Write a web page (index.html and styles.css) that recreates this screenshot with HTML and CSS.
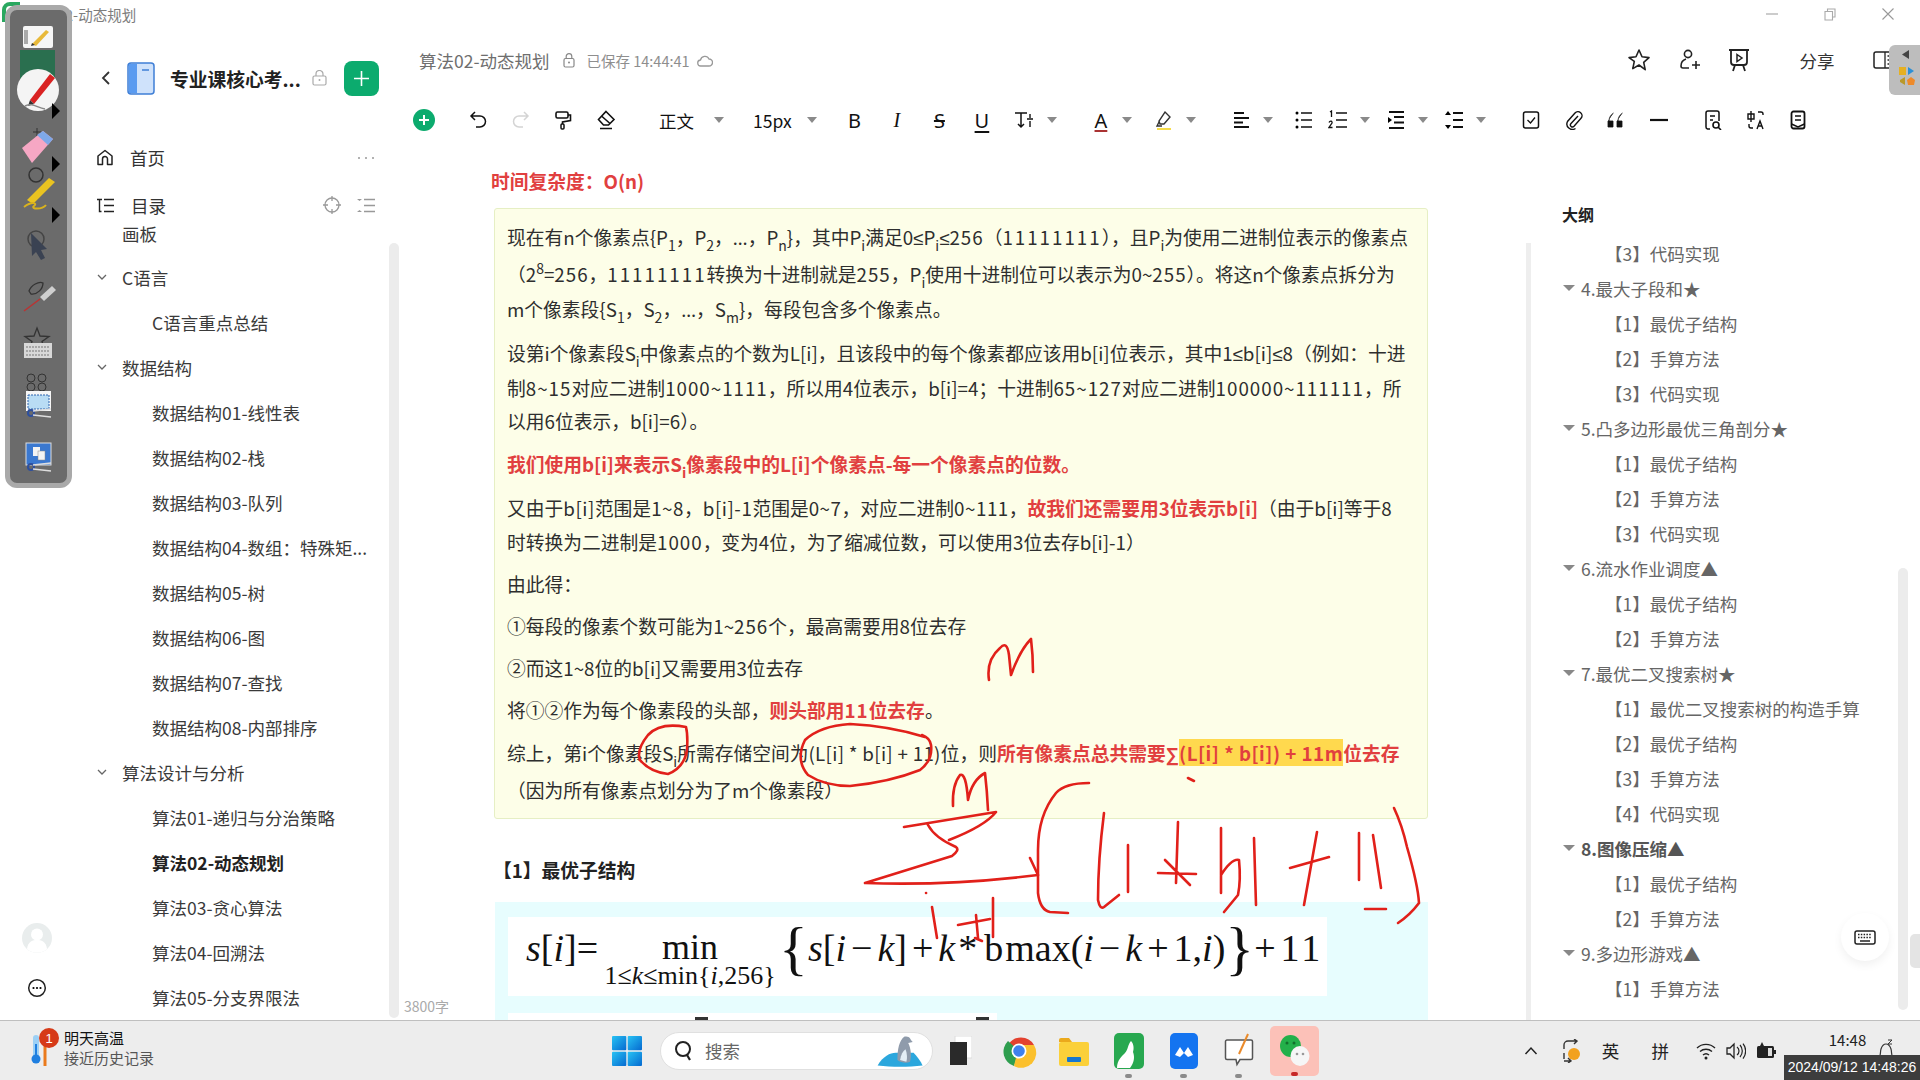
FILE: index.html
```html
<!DOCTYPE html>
<html lang="zh-CN">
<head>
<meta charset="utf-8">
<title>算法02-动态规划</title>
<link rel="stylesheet" href="styles.css">
</head>
<body>
<svg class="defs" width="0" height="0">
  <defs>
    <symbol id="caret" viewBox="0 0 10 8"><path d="M0 1h10L5 7z" fill="#8a8a8a"/></symbol>
    <symbol id="tri" viewBox="0 0 12 8"><path d="M0 1h12L6 7z" fill="#888"/></symbol>
    <symbol id="chev" viewBox="0 0 12 8"><path d="M2 2l4 4 4-4" fill="none" stroke="#666" stroke-width="1.3"/></symbol>
    <linearGradient id="winblue" x1="0" y1="0" x2="1" y2="1"><stop offset="0" stop-color="#28c3f4"/><stop offset="1" stop-color="#0569d0"/></linearGradient>
  </defs>
</svg>
<div class="app">
  <header class="titlebar">
    <span class="win-title">算法02-动态规划</span>
    <div class="win-controls">
      <svg width="14" height="14" viewBox="0 0 14 14"><path d="M1 7h12" stroke="#aaa" stroke-width="1.2"/></svg>
      <svg width="14" height="14" viewBox="0 0 14 14"><path d="M2 4.500h7.500V13H2zM4.500 4.500V2H12v8h-2.500" fill="none" stroke="#aaa" stroke-width="1.100"/></svg>
      <svg width="14" height="14" viewBox="0 0 14 14"><path d="M1.500 1.500l11 11M12.500 1.500l-11 11" stroke="#999" stroke-width="1.100"/></svg>
    </div>
  </header>

  <div class="workspace">
    <aside class="sidebar">
      <div class="rail">
        <svg class="avatar" width="30" height="30" viewBox="0 0 30 30"><circle cx="15" cy="15" r="15" fill="#e9eded"/><circle cx="15" cy="11.500" r="6" fill="#fff"/><path d="M5 26c1-8 6-9 10-9s9 1 10 9a15 15 0 0 1-20 0z" fill="#fff"/></svg>
        <svg class="rail-more" width="20" height="20" viewBox="0 0 20 20"><circle cx="10" cy="10" r="8.300" fill="none" stroke="#222" stroke-width="1.500"/><circle cx="6.500" cy="10" r="1.100"/><circle cx="10" cy="10" r="1.100"/><circle cx="13.500" cy="10" r="1.100"/></svg>
      </div>
      <div class="panel">
        <div class="kb-head">
          <svg class="kb-back" width="12" height="18" viewBox="0 0 12 18"><path d="M9 3L3 9l6 6" fill="none" stroke="#333" stroke-width="1.800"/></svg>
          <svg class="kb-book" width="28" height="33" viewBox="0 0 28 33"><rect x="1" y="1" width="26" height="31" rx="3" fill="#cfe2fb" stroke="#3f7fd6" stroke-width="1.500"/><path d="M2 2h8v29H2z" fill="#5a9bf0"/><path d="M15 8h7" stroke="#3f7fd6" stroke-width="1.500"/></svg>
          <strong class="kb-name">专业课核心考...</strong>
          <svg class="kb-lock" width="15" height="16" viewBox="0 0 15 16"><rect x="1" y="6" width="13" height="9" rx="1.500" fill="none" stroke="#aaa" stroke-width="1.200"/><path d="M4 6V4a3.500 3.500 0 0 1 7 0v2" fill="none" stroke="#aaa" stroke-width="1.200"/><circle cx="7.500" cy="10" r="1" fill="#aaa"/></svg>
          <button class="kb-add"><svg width="17" height="17" viewBox="0 0 17 17"><path d="M8.500 1v15M1 8.500h15" stroke="#fff" stroke-width="1.600"/></svg></button>
        </div>
        <div class="nav-row">
          <svg width="16" height="17" viewBox="0 0 16 17"><path d="M1 7l7-5.500L15 7v8.500h-4.500V10a2.500 2.500 0 0 0-5 0v5.500H1z" fill="none" stroke="#222" stroke-width="1.500" stroke-linejoin="round"/></svg>
          <span class="nav-label">首页</span>
          <span class="nav-tools"><svg width="18" height="4" viewBox="0 0 18 4"><circle cx="2" cy="2" r="1" fill="#999"/><circle cx="9" cy="2" r="1" fill="#999"/><circle cx="16" cy="2" r="1" fill="#999"/></svg></span>
        </div>
        <div class="nav-row nav-toc">
          <svg width="17" height="15" viewBox="0 0 17 15"><path d="M0 1.500h5M2.500 1.500v12h2M7 1.500h10M7 7.500h10M7 13.500h10" fill="none" stroke="#222" stroke-width="1.400"/></svg>
          <span class="nav-label">目录</span>
          <span class="nav-tools">
            <svg width="20" height="20" viewBox="0 0 20 20"><circle cx="10" cy="10" r="7" fill="none" stroke="#999" stroke-width="1.300"/><path d="M10 1v5M10 14v5M1 10h5M14 10h5" stroke="#999" stroke-width="1.300"/></svg>
            <svg width="18" height="15" viewBox="0 0 18 15"><path d="M0 1l2.500 2L5 1zM0 14l2.500-2L5 14z" fill="#999"/><path d="M7 1.500h11M7 7.500h11M7 13.500h11" stroke="#999" stroke-width="1.300"/></svg>
          </span>
        </div>
        <div class="tree-wrap">
          <div class="tree">
            <div class="tree-row l0 first">画板</div>
            <div class="tree-row l0"><svg class="tw" width="12" height="8"><use href="#chev"/></svg>C语言</div>
            <div class="tree-row l1">C语言重点总结</div>
            <div class="tree-row l0"><svg class="tw" width="12" height="8"><use href="#chev"/></svg>数据结构</div>
            <div class="tree-row l1">数据结构01-线性表</div>
            <div class="tree-row l1">数据结构02-栈</div>
            <div class="tree-row l1">数据结构03-队列</div>
            <div class="tree-row l1">数据结构04-数组：特殊矩...</div>
            <div class="tree-row l1">数据结构05-树</div>
            <div class="tree-row l1">数据结构06-图</div>
            <div class="tree-row l1">数据结构07-查找</div>
            <div class="tree-row l1">数据结构08-内部排序</div>
            <div class="tree-row l0"><svg class="tw" width="12" height="8"><use href="#chev"/></svg>算法设计与分析</div>
            <div class="tree-row l1">算法01-递归与分治策略</div>
            <div class="tree-row l1 current">算法02-动态规划</div>
            <div class="tree-row l1">算法03-贪心算法</div>
            <div class="tree-row l1">算法04-回溯法</div>
            <div class="tree-row l1">算法05-分支界限法</div>
          </div>
          <div class="tree-scroll"></div>
        </div>
      </div>
    </aside>

    <main class="main">
      <div class="docbar">
        <span class="doc-name">算法02-动态规划</span>
        <svg class="doc-lock" width="12" height="15" viewBox="0 0 12 15"><rect x="1" y="5.500" width="10" height="8.500" rx="1.500" fill="none" stroke="#888" stroke-width="1.200"/><path d="M3.200 5.500V3.500a2.800 2.800 0 0 1 5.600 0v2" fill="none" stroke="#888" stroke-width="1.200"/><circle cx="6" cy="9.500" r="1" fill="#888"/></svg>
        <span class="doc-saved">已保存 14:44:41</span>
        <svg class="doc-cloud" width="16" height="13" viewBox="0 0 16 13"><path d="M4 12a3 3 0 0 1-.5-6 4.500 4.500 0 0 1 8.500-1 3.500 3.500 0 0 1 0 7z" fill="none" stroke="#999" stroke-width="1.300"/></svg>
        <div class="doc-actions">
          <svg width="24" height="24" viewBox="0 0 24 24"><path d="M12 2l3 6.800 7 .8-5.300 4.800 1.500 7.200L12 17l-6.200 3.600 1.500-7.200L2 9.600l7-.8z" fill="none" stroke="#222" stroke-width="1.600" stroke-linejoin="round"/></svg>
          <svg width="24" height="24" viewBox="0 0 24 24"><circle cx="11" cy="6" r="3.600" fill="none" stroke="#222" stroke-width="1.600"/><path d="M9 11c-3 1-5 4-5 7 0 1 1 2 2 2h6M15 17h8M19 13v8" fill="none" stroke="#222" stroke-width="1.600"/></svg>
          <svg width="24" height="24" viewBox="0 0 24 24"><path d="M2 2h20M4 2v12a3 3 0 0 0 3 3h10a3 3 0 0 0 3-3V2M8 17l-2 6M16 17l2 6" fill="none" stroke="#222" stroke-width="1.800"/><path d="M10 6.500l5 3.500-5 3.500z" fill="none" stroke="#222" stroke-width="1.500"/></svg>
          <span class="share">分享</span>
          <svg width="20" height="20" viewBox="0 0 20 20"><rect x="1" y="2" width="18" height="16" rx="2" fill="none" stroke="#222" stroke-width="1.500"/><path d="M12 2v16M14.500 6h3M14.500 10h3M14.500 14h3" stroke="#222" stroke-width="1.300"/></svg>
        </div>
      </div>

      <div class="toolbar">
        <button class="fmt-add"><svg width="14" height="14" viewBox="0 0 14 14"><path d="M7 2v10M2 7h10" stroke="#fff" stroke-width="2"/></svg></button>
        <div class="grp g-hist">
          <span class="tb"><svg viewBox="0 0 20 20"><path d="M7 2L3 6l4 4M3 6h9a5.500 5.500 0 0 1 0 11H8" fill="none" stroke="#111" stroke-width="1.500"/></svg></span>
          <span class="tb"><svg viewBox="0 0 20 20"><path d="M13 2l4 4-4 4M17 6H8a5.500 5.500 0 0 0 0 11h4" fill="none" stroke="#d4d4d4" stroke-width="1.500"/></svg></span>
          <span class="tb"><svg viewBox="0 0 20 20"><rect x="3" y="2" width="12" height="6" rx="1.500" fill="none" stroke="#111" stroke-width="1.600"/><path d="M15 5h2.500v5.500L9.500 12v2" fill="none" stroke="#111" stroke-width="1.600"/><rect x="8" y="14" width="3" height="5" rx="1" fill="none" stroke="#111" stroke-width="1.500"/></svg></span>
          <span class="tb"><svg viewBox="0 0 20 20"><path d="M10 1.500l8 8L12.500 15h-5L2.500 9.500zM5.500 6l8.500 7.500M4 18.500h12" fill="none" stroke="#111" stroke-width="1.600"/></svg></span>
        </div>
        <div class="sel s-style"><span>正文</span><svg class="crt" width="10" height="8"><use href="#caret"/></svg></div>
        <div class="sel s-size"><span>15px</span><svg class="crt" width="10" height="8"><use href="#caret"/></svg></div>
        <div class="grp g-text">
          <span class="tb txt">B</span>
          <span class="tb txt it">I</span>
          <span class="tb txt st">S</span>
          <span class="tb txt un">U</span>
          <span class="tb"><svg viewBox="0 0 20 20"><path d="M1 3h12M7 3v14M4 14l3 3 3-3" fill="none" stroke="#111" stroke-width="1.500"/><path d="M13 9h6M16 4v4M16 11v6" fill="none" stroke="#111" stroke-width="1.400"/></svg></span>
          <svg class="crt c1" width="10" height="8"><use href="#caret"/></svg>
        </div>
        <div class="grp g-color">
          <span class="tb txt fc">A</span>
          <svg class="crt" width="10" height="8"><use href="#caret"/></svg>
          <span class="tb hl"><svg viewBox="0 0 20 20"><path d="M11 2l5 5-6 7H6l-1-3zM5 12l-2 4h5" fill="none" stroke="#333" stroke-width="1.400"/><path d="M3 19h14" stroke="#f6dc4a" stroke-width="2"/></svg></span>
          <svg class="crt" width="10" height="8"><use href="#caret"/></svg>
        </div>
        <div class="grp g-para">
          <span class="tb"><svg viewBox="0 0 20 20"><path d="M2 3h10M2 8h15M2 12.500h9M2 17h15" stroke="#111" stroke-width="1.800"/></svg></span>
          <svg class="crt" width="10" height="8"><use href="#caret"/></svg>
          <span class="tb n m14"><svg viewBox="0 0 20 20"><path d="M7 3h11M7 10h11M7 17h11" stroke="#111" stroke-width="1.600"/><circle cx="3" cy="3" r="1.500"/><circle cx="3" cy="10" r="1.500"/><circle cx="3" cy="17" r="1.500"/></svg></span>
          <span class="tb n"><svg viewBox="0 0 20 20"><path d="M8 3h11M8 10h11M8 17h11" stroke="#111" stroke-width="1.600"/><path d="M2 2l1.500-1v6M1 12.500c1-2 3.500-1.500 3 .5L1 17.500h3.500" fill="none" stroke="#111" stroke-width="1.300"/></svg></span>
          <svg class="crt c5" width="10" height="8"><use href="#caret"/></svg>
          <span class="tb n m9"><svg viewBox="0 0 20 20"><path d="M3 2h15M8 7h10M8 12.500h10M3 18h15" stroke="#111" stroke-width="1.800"/><path d="M2 7l4 3-4 3z"/></svg></span>
          <svg class="crt c5" width="10" height="8"><use href="#caret"/></svg>
          <span class="tb n m9"><svg viewBox="0 0 20 20"><path d="M9 3h10M9 10h10M9 17h10" stroke="#111" stroke-width="1.800"/><path d="M4 1l3 4H1zM4 19l3-4H1z"/></svg></span>
          <svg class="crt c5" width="10" height="8"><use href="#caret"/></svg>
        </div>
        <div class="grp g-ins">
          <span class="tb"><svg viewBox="0 0 20 20"><rect x="2.500" y="2" width="15" height="16" rx="2" fill="none" stroke="#111" stroke-width="1.500"/><path d="M6.500 10l3 3 4.500-5.500" fill="none" stroke="#111" stroke-width="1.300"/></svg></span>
          <span class="tb"><svg viewBox="0 0 20 20"><path d="M14 6l-7 7.500a2 2 0 0 0 3 2.800l7-8a4 4 0 0 0-6-5.300l-7.500 8.500a5.500 5.500 0 0 0 8 7" fill="none" stroke="#111" stroke-width="1.400"/></svg></span>
          <span class="tb"><svg viewBox="0 0 20 20"><path d="M7.500 3C4.500 5 3 8 3 11h4v6H2v-6M16.500 3c-3 2-4.500 5-4.500 8h4v6h-5v-6" fill="#111" stroke="#111" stroke-width=".8"/></svg></span>
          <span class="tb"><svg viewBox="0 0 20 20"><path d="M1 10h18" stroke="#111" stroke-width="2.200"/></svg></span>
        </div>
        <div class="grp g-ext">
          <span class="tb"><svg viewBox="0 0 20 20"><path d="M7 19H4.500a2 2 0 0 1-1.500-2V3a2 2 0 0 1 2-2h9a2 2 0 0 1 2 2v8M7 6h5M7 10h3" fill="none" stroke="#111" stroke-width="1.500"/><circle cx="13" cy="15" r="3" fill="none" stroke="#111" stroke-width="1.600"/><path d="M15 17l3 3" stroke="#111" stroke-width="1.600"/></svg></span>
          <span class="tb"><svg viewBox="0 0 20 20"><path d="M2 4h6v5H2zM5 1v11M12 2h3a2 2 0 0 1 2 2v1M3 14v2a2 2 0 0 0 2 2h2M11 19l3-8 3 8M12 16h4" fill="none" stroke="#111" stroke-width="1.400"/></svg></span>
          <span class="tb"><svg viewBox="0 0 20 20"><rect x="3.500" y="1.500" width="13" height="17" rx="2" fill="none" stroke="#111" stroke-width="1.800"/><path d="M7 6h6M7 10h6M3.500 14l6.500 3 6.500-3" fill="none" stroke="#111" stroke-width="1.500"/></svg></span>
        </div>
      </div>

      <div class="doc-row">
        <section class="editor">
          <p class="ed-red-head">时间复杂度：O(n)</p>
          <div class="callout">
            <p class="tall">现在有n个像素点{P<sub>1</sub>，P<sub>2</sub>，<span class="sym">…</span>，P<sub>n</sub>}，其中P<sub>i</sub>满足0<span class="sym">≤</span>P<sub>i</sub><span class="sym">≤</span><span class="d">256</span>（<span class="d2">11111111</span>），且P<sub>i</sub>为使用二进制位表示的像素点<br>（2<sup>8</sup>=<span class="d">256</span>，<span class="d2">11111111</span>转换为十进制就是<span class="d">255</span>，P<sub>i</sub>使用十进制位可以表示为0~<span class="d">255</span>）。将这n个像素点拆分为<br>m个像素段{S<sub>1</sub>，S<sub>2</sub>，<span class="sym">…</span>，S<sub>m</sub>}，每段包含多个像素点。</p>
            <p>设第i个像素段S<sub>i</sub>中像素点的个数为L[i]，且该段中的每个像素都应该用b[i]位表示，其中1<span class="sym">≤</span>b[i]<span class="sym">≤</span>8（例如：十进<br>制<span class="d">8~15</span>对应二进制<span class="d">1000~1111</span>，所以用4位表示，b[i]=4；十进制<span class="d">65~127</span>对应二进制<span class="d">100000~111111</span>，所<br>以用6位表示，b[i]=6）。</p>
            <p class="after-sub"><b class="red">我们使用b[i]来表示S<sub>i</sub>像素段中的L[i]个像素点-每一个像素点的位数。</b></p>
            <p>又由于<span class="d5">b[i]</span>范围是<span class="d5">1~8</span>，<span class="d5">b[i]-1</span>范围是<span class="d5">0~7</span>，对应二进制<span class="d5">0~111</span>，<b class="red">故我们还需要用3位表示b[i]</b>（由于b[i]等于8<br>时转换为二进制是<span class="d">1000</span>，变为4位，为了缩减位数，可以使用3位去存b[i]-1）</p>
            <p>由此得：</p>
            <p>①每段的像素个数可能为1~<span class="d">256</span>个，最高需要用8位去存</p>
            <p>②而这1~8位的b[i]又需要用3位去存</p>
            <p>将①②作为每个像素段的头部，<b class="red">则头部用<span class="d">11</span>位去存</b>。</p>
            <p class="tall">综上，第i个像素段S<sub>i</sub>所需存储空间为<span class="d3">(L[i] * b[i] + 11)</span>位，则<b class="red">所有像素点总共需要<span class="sym">∑</span><mark>(L[i] * b[i]) + 11m</mark>位去存</b><br>（因为所有像素点划分为了m个像素段）</p>
          </div>
          <h3 class="ed-h3">【1】最优子结构</h3>
          <div class="figure">
            <div class="eq">
              <span class="eq-i">s</span><span>[</span><span class="eq-i">i</span><span>]=</span>
              <span class="eq-lim"><span class="eq-min">min</span><span class="eq-under">1≤<i>k</i>≤min{<i>i</i>,256}</span></span>
              <span class="eq-brace open">{</span><span class="eq-i">s</span><span>[</span><span class="eq-i">i</span><span class="eq-op">−</span><span class="eq-i">k</span><span>]</span><span class="eq-op">+</span><span class="eq-i">k</span><span class="eq-star">*</span><span>b</span><span class="eq-gap">max(</span><span class="eq-i">i</span><span class="eq-op">−</span><span class="eq-i">k</span><span class="eq-op">+</span><span>1,</span><span class="eq-i">i</span><span>)</span><span class="eq-brace close">}</span><span class="eq-op">+</span><span class="eq-tail">11</span>
            </div>
            <div class="eq2"><span class="tick"></span><span class="tick"></span></div>
          </div>
          <span class="wordcount">3800字</span>
        </section>
        <aside class="outline">
          <div class="outline-title">大纲</div>
          <div class="outline-list">
            <div class="ol2">【3】代码实现</div>
            <div class="ol1"><svg class="olt" width="12" height="8"><use href="#tri"/></svg>4.最大子段和★</div>
            <div class="ol2">【1】最优子结构</div>
            <div class="ol2">【2】手算方法</div>
            <div class="ol2">【3】代码实现</div>
            <div class="ol1"><svg class="olt" width="12" height="8"><use href="#tri"/></svg>5.凸多边形最优三角剖分★</div>
            <div class="ol2">【1】最优子结构</div>
            <div class="ol2">【2】手算方法</div>
            <div class="ol2">【3】代码实现</div>
            <div class="ol1"><svg class="olt" width="12" height="8"><use href="#tri"/></svg>6.流水作业调度▲</div>
            <div class="ol2">【1】最优子结构</div>
            <div class="ol2">【2】手算方法</div>
            <div class="ol1"><svg class="olt" width="12" height="8"><use href="#tri"/></svg>7.最优二叉搜索树★</div>
            <div class="ol2">【1】最优二叉搜索树的构造手算</div>
            <div class="ol2">【2】最优子结构</div>
            <div class="ol2">【3】手算方法</div>
            <div class="ol2">【4】代码实现</div>
            <div class="ol1 active"><svg class="olt" width="12" height="8"><use href="#tri"/></svg>8.图像压缩▲</div>
            <div class="ol2">【1】最优子结构</div>
            <div class="ol2">【2】手算方法</div>
            <div class="ol1"><svg class="olt" width="12" height="8"><use href="#tri"/></svg>9.多边形游戏▲</div>
            <div class="ol2">【1】手算方法</div>
          </div>
          <div class="outline-scroll"></div>
          <div class="outline-scroll2"></div>
          <div class="kbd-fab"><svg width="22" height="15" viewBox="0 0 22 15"><rect x="1" y="1" width="20" height="13" rx="2" fill="none" stroke="#222" stroke-width="1.500"/><path d="M4 4.500h14M4 7.500h14" stroke="#222" stroke-width="1.500" stroke-dasharray="1.500 1.300"/><path d="M6 11h10" stroke="#222" stroke-width="1.500"/></svg></div>
        </aside>
      </div>
    </main>
  </div>

  <footer class="taskbar">
    <div class="weather">
      <svg class="therm" width="30" height="34" viewBox="0 0 30 34"><path d="M6 4v18" stroke="#9cd0f5" stroke-width="6" stroke-linecap="round"/><circle cx="6" cy="25" r="4.500" fill="#1f7fe0"/><path d="M6 10v14" stroke="#1f7fe0" stroke-width="2"/><path d="M15 8v24" stroke="#ea7a1c" stroke-width="3"/></svg>
      <span class="wx-badge">1</span>
      <div class="wx-text"><span class="wx-a">明天高温</span><span class="wx-b">接近历史记录</span></div>
    </div>
    <svg class="winlogo" width="30" height="30" viewBox="0 0 30 30"><rect x="0" y="0" width="14.300" height="14.300" rx="1" fill="url(#winblue)"/><rect x="15.700" y="0" width="14.300" height="14.300" rx="1" fill="url(#winblue)"/><rect x="0" y="15.700" width="14.300" height="14.300" rx="1" fill="url(#winblue)"/><rect x="15.700" y="15.700" width="14.300" height="14.300" rx="1" fill="url(#winblue)"/></svg>
    <div class="searchbox">
      <svg width="20" height="22" viewBox="0 0 20 22"><circle cx="9" cy="9" r="7" fill="none" stroke="#222" stroke-width="2"/><path d="M13 15l3 5" stroke="#222" stroke-width="2.200"/></svg>
      <span class="search-ph">搜索</span>
      <svg class="dolphin" width="60" height="36" viewBox="0 0 60 36"><path d="M4 34c6-10 14-14 20-14l20 0c4 4 8 10 10 14-16 2-34 2-50 0z" fill="#2ba7dd"/><path d="M26 28c0-12 2-22 8-26 6-1 6 3 9 6l-5 1c3 6 4 14 2 21-4 2-10 1-14-2z" fill="#8f9bab"/><path d="M29 28c1-6 3-10 6-12 2 5 2 10 1 14z" fill="#e4eef6"/></svg>
    </div>
    <svg class="taskview" width="22" height="29" viewBox="0 0 22 29"><rect x="5" y="0" width="17" height="22" fill="#fff" stroke="#ddd"/><rect x="0" y="6" width="17" height="23" fill="#2a2a2a"/></svg>
    <div class="apps">
      <div class="app-slot">
        <svg width="36" height="36" viewBox="0 0 36 36"><path d="M18 18L7 12A15 15 0 0 1 33 12H18z" fill="#e3412f"/><path d="M18 18L7 8A15 15 0 0 0 13 33z" fill="#2e9e4f"/><path d="M18 12H33A15 15 0 0 1 13 33z" fill="#fbc02d"/><circle cx="18" cy="18" r="7.500" fill="#fff"/><circle cx="18" cy="18" r="5.800" fill="#3f81ee"/></svg>
      </div>
      <div class="app-slot">
        <svg width="30" height="32" viewBox="0 0 30 32"><path d="M0 5a2 2 0 0 1 2-2h8l3 4h-13z" fill="#eba91c"/><rect x="0" y="7" width="30" height="24" rx="2" fill="#fbd03a"/><rect x="8" y="22" width="14" height="5" rx="1" fill="#1677d0"/></svg>
      </div>
      <div class="app-slot run">
        <svg width="30" height="36" viewBox="0 0 30 36"><rect width="30" height="36" rx="5" fill="#28a850"/><path d="M3 35c0-8 5-12 8-15 3-3 3-9 6-12 3 3 3 8 2 11 2 5 1 11-3 16z" fill="#fff"/></svg>
      </div>
      <div class="app-slot run">
        <svg width="28" height="36" viewBox="0 0 28 36"><rect width="28" height="36" rx="5" fill="#1474f0"/><path d="M5 22l5-8 4 6 4-6 5 8-5 2-4-4-4 4z" fill="#fff"/></svg>
      </div>
      <div class="app-slot run">
        <svg width="30" height="38" viewBox="0 0 30 38"><path d="M3 8h24a1.500 1.500 0 0 1 1.500 1.500V26a1.500 1.500 0 0 1-1.500 1.500H16l-3 5-1-5H3A1.500 1.500 0 0 1 1.500 26V9.500A1.500 1.500 0 0 1 3 8z" fill="#fff" stroke="#555" stroke-width="1.500"/><path d="M15 22l9-20" stroke="#ea8a2a" stroke-width="2"/></svg>
      </div>
      <div class="app-slot wechat">
        <svg width="30" height="32" viewBox="0 0 30 32"><ellipse cx="10.500" cy="11" rx="10.500" ry="11" fill="#23b04a"/><circle cx="7" cy="8" r="1.500" fill="#11702c"/><circle cx="14" cy="8" r="1.500" fill="#11702c"/><ellipse cx="20" cy="21" rx="9.500" ry="10" fill="#f6f6f6"/><circle cx="17" cy="19" r="1.300" fill="#999"/><circle cx="23" cy="19" r="1.300" fill="#999"/></svg>
      </div>
    </div>
    <div class="tray">
      <span class="ti w40"><svg width="14" height="9" viewBox="0 0 14 9"><path d="M1.500 8L7 2l5.500 6" fill="none" stroke="#222" stroke-width="1.500"/></svg></span>
      <span class="ti w40"><svg width="20" height="24" viewBox="0 0 20 24"><path d="M3 10V6a4 4 0 0 1 4-4h9M13 0l3 2-3 3M3 22h6M7 19l3 3-3 2M3 14v6" fill="none" stroke="#333" stroke-width="1.400"/><circle cx="13" cy="15" r="6" fill="#f2a11f"/></svg></span>
      <span class="ti ime w39">英</span>
      <span class="ti ime w60">拼</span>
      <span class="ti w30"><svg width="20" height="18" viewBox="0 0 20 18"><path d="M1 6a13 13 0 0 1 18 0M4 9.500a9 9 0 0 1 12 0M7 13a4.500 4.500 0 0 1 6 0" fill="none" stroke="#222" stroke-width="1.400"/><circle cx="10" cy="16" r="1.500" fill="#222"/></svg></span>
      <span class="ti w30"><svg width="20" height="18" viewBox="0 0 20 18"><path d="M1 6h3l4-4v14l-4-4H1z" fill="none" stroke="#222" stroke-width="1.300"/><path d="M11 5a5 5 0 0 1 0 8M14 3a9 9 0 0 1 0 12M17 1.500a12 12 0 0 1 0 15" fill="none" stroke="#222" stroke-width="1.200"/></svg></span>
      <span class="ti w30"><svg width="20" height="20" viewBox="0 0 20 20"><rect x="1" y="5" width="17" height="12" rx="1.500" fill="#222"/><path d="M6 1l3 6H3zM18 9h2v4h-2" fill="#222"/><rect x="12" y="7" width="4" height="8" fill="#ddd"/></svg></span>
      <div class="clock"><span>14:48</span><span>2024/9/12</span></div>
      <svg class="bell" width="18" height="24" viewBox="0 0 18 24"><path d="M2 19c2-2 1-6 2-9s3-5 5-5 4 2 5 5 0 7 2 9zM7 21a2 2 0 0 0 4 0" fill="none" stroke="#333" stroke-width="1.200"/><path d="M11 1h4l-4 4h4" fill="none" stroke="#333" stroke-width="1"/></svg>
    </div>
  </footer>
</div>

<div class="stamp">2024/09/12 14:48:26</div>

<div class="pen-bar">
  <div class="pen-inner">
    <svg class="pen-art" width="58" height="473" viewBox="0 0 58 473">
      <rect x="14" y="16" width="30" height="22" rx="2" fill="#f6f6f6"/><path d="M17 20v14" stroke="#aaa" stroke-width="4"/><path d="M23 34l14-14 3 2-13 14z" fill="#e8b93a"/><path d="M22 36l1-3 3 2z" fill="#333"/>
      <rect x="11" y="40" width="35" height="30" fill="#2a6f4f"/>
      <circle cx="29" cy="80" r="21" fill="#f4f4f4"/><path d="M21 90L41 64l5 4-21 26z" fill="#d92222"/><path d="M21 90l-2 6 6-2z" fill="#333"/><path d="M16 96c8-4 12 2 20 3" stroke="#888" fill="none" stroke-width="1.500"/><path d="M43 93l8 8-8 8z" fill="#000"/>
      <path d="M28 118v8M24 122h8" stroke="#333"/><path d="M13 138l21-17 10 8-21 24z" fill="#f6a7c4"/><path d="M28 125l6-4 10 8-5 6z" fill="#7ea8e8"/><path d="M43 146l8 8-8 8z" fill="#000"/>
      <circle cx="27" cy="165" r="7" fill="none" stroke="#333" stroke-width="1.500"/><path d="M18 190l22-22 6 4-22 22z" fill="#eac321"/><path d="M15 197c8-6 14-4 10-1s8 4 12-1" fill="none" stroke="#d9b21e" stroke-width="2"/><path d="M43 197l8 8-8 8z" fill="#000"/>
      <circle cx="27" cy="229" r="8" fill="none" stroke="#444" stroke-width="1.500"/><path d="M22 223l16 16-6 1 4 8-4 2-5-8-4 4z" fill="#3a4252"/>
      <path d="M20 281c2-6 10-10 14-8 0 6-6 12-12 11z" fill="none" stroke="#333" stroke-width="1.300"/><path d="M31 287l12-11 4 4-12 11z" fill="#cfcfcf"/><path d="M15 301l16-12" stroke="#b33" stroke-width="1.500"/>
      <path d="M28 318l3 8 9 .5-7 5 2.500 8.500-7.500-5-7.500 5 2.500-8.500-7-5 9-.5z" fill="none" stroke="#333" stroke-width="1.300"/><rect x="15" y="333" width="28" height="15" fill="#d8d8d8"/><path d="M17 337h24M17 341h24M17 345h24" stroke="#777" stroke-dasharray="2 1"/>
      <circle cx="22" cy="368" r="4" fill="none" stroke="#333"/><circle cx="33" cy="368" r="4" fill="none" stroke="#333"/><circle cx="22" cy="377" r="4" fill="none" stroke="#333"/><circle cx="33" cy="377" r="4" fill="none" stroke="#333"/><rect x="17" y="381" width="25" height="20" fill="#f6f6f6"/><rect x="19" y="385" width="21" height="14" fill="#b9dcf4" stroke="#2d62ad" stroke-dasharray="2 1"/><circle cx="22" cy="403" r="3" fill="none" stroke="#2d4f9e" stroke-width="2"/><path d="M24 401l18-2M24 405l18 2" stroke="#ddd" stroke-width="1.500"/>
      <rect x="17" y="433" width="25" height="22" fill="#3a78d0" stroke="#ddd"/><rect x="24" y="437" width="7" height="9" fill="#f3f3f3"/><rect x="29" y="441" width="7" height="9" fill="#f3f3f3" stroke="#888" stroke-width=".5"/><circle cx="22" cy="457" r="3" fill="none" stroke="#2d4f9e" stroke-width="2"/><path d="M24 455l18-2M24 459l18 2" stroke="#ddd" stroke-width="1.500"/>
    </svg>
  </div>
</div>

<svg class="logo-arc" width="22" height="22" viewBox="0 0 22 22"><path d="M3 20V8a6 6 0 0 1 6-6h10" fill="none" stroke="#2aa860" stroke-width="4"/></svg>

<div class="side-tab">
  <svg width="18" height="40" viewBox="0 0 18 40"><path d="M12 4v9l-7-4.500z" fill="#444"/><rect x="2" y="21" width="7" height="8" fill="#e6b022"/><path d="M11 21l6 4-6 4z" fill="#2b8fd6"/><path d="M8 31v8l-5-3v-2z" fill="#b9992a"/><path d="M14 31l4 3-1 5h-6l-1-5z" fill="#ee8a2a"/></svg>
</div>

<svg class="ink" width="1920" height="1080" viewBox="0 0 1920 1080" fill="none" stroke="#e1201a" stroke-width="2.600" stroke-linecap="round" stroke-linejoin="round">
  <path d="M989 680Q986 660 1000 648Q1007 640 1009 655L1011 675Q1020 650 1031 639Q1033 655 1033 672"/>
  <path d="M686 727Q660 722 648 735Q636 750 640 760Q650 772 668 774Q684 768 687 750Q688 735 686 727"/>
  <path d="M925 737Q890 726 850 724Q820 726 805 740Q795 760 808 775Q825 786 850 786Q890 782 920 770Q933 760 931 745Q930 738 922 735"/>
  <path d="M953 806Q952 785 960 775Q966 772 968 800Q972 780 985 773Q987 790 988 810"/>
  <path d="M904 827L996 812Q985 826 949 840M928 825Q935 838 956 847Q960 850 952 856L865 883Q950 886 1038 875M1030 858L1038 875"/>
  <path d="M926 893h.1M932 907L937 938M976 915L978 938M958 925L990 919M993 898L993 937M975 938L982 941"/>
  <path d="M1089 783Q1065 783 1056 793Q1038 815 1038 850L1038 893Q1040 910 1050 912L1068 913"/>
  <path d="M1104 813Q1098 860 1098 900Q1100 910 1104 907L1119 895"/>
  <path d="M1128 845V892M1158 873L1196 874M1178 822L1176 883M1165 860L1190 885"/>
  <path d="M1221 828V893M1221 875Q1232 858 1239 860Q1241 880 1238 895L1224 912"/>
  <path d="M1254 838L1256 905M1317 832L1304 905M1290 868L1329 857"/>
  <path d="M1359 833L1359 880M1373 835L1381 888M1365 909H1386"/>
  <path d="M1394 808Q1402 825 1407 847Q1418 885 1419 903Q1410 915 1398 923"/>
  <path d="M1188 778L1194 781"/>
</svg>
</body>
</html>
```
FILE: styles.css
```css
*{box-sizing:border-box}
html,body{margin:0;height:100%;overflow:hidden}
body{background:#fff;font-family:"Noto Sans CJK SC","Noto Sans",sans-serif;color:#333;position:relative}
.defs{position:absolute}
.app{display:flex;flex-direction:column;width:1920px;height:1080px}
button{border:0;padding:0;display:flex;align-items:center;justify-content:center}

/* title bar */
.titlebar{height:28px;flex:none;display:flex;align-items:center;padding-left:28px}
.win-title{font-size:14.5px;color:#7d7d7d}
.win-controls{margin-left:auto;display:flex;gap:44px;padding-right:25px}

.workspace{flex:1;min-height:0;display:flex}

/* left */
.sidebar{width:400px;flex:none;display:flex}
.rail{width:73px;flex:none;display:flex;flex-direction:column;align-items:center;justify-content:flex-end;padding-bottom:22px;gap:25px}
.panel{flex:1;min-width:0;display:flex;flex-direction:column}
.kb-head{height:106px;flex:none;display:flex;align-items:center;padding:0 0 6px 27px}
.kb-book{margin-left:15px}
.kb-name{margin-left:15px;font-size:18.75px;font-weight:700;color:#222;width:135px;white-space:nowrap}
.kb-lock{margin-left:7px}
.kb-add{margin-left:17px;width:35px;height:35px;border-radius:8px;background:#0cab6e}
.nav-row{height:47px;flex:none;display:flex;align-items:center;padding-left:24px;padding-right:25px}
.nav-toc{height:43px;padding-top:5px}
.nav-label{margin-left:17px;font-size:17.5px;color:#333}
.nav-tools{margin-left:auto;display:flex;align-items:center;gap:15px}
.tree-wrap{flex:1;min-height:0;overflow:hidden;display:flex;position:relative}
.tree{flex:1;min-width:0}
.tree-row{height:45px;display:flex;align-items:center;font-size:17.5px;color:#3a3a3a;white-space:nowrap}
.first{height:30.500px;line-height:20px;align-items:flex-start}
.l0{padding-left:49px;position:relative}
.l1{padding-left:79px}
.current{font-weight:700;color:#222}
.tw{position:absolute;left:23px;top:18px}
.tree-scroll{width:10px;flex:none;margin:19px 1px 2px 0;background:#ececec;border-radius:5px}

/* main */
.main{flex:1;min-width:0;display:flex;flex-direction:column}
.docbar{height:64px;flex:none;display:flex;align-items:center;padding-left:19px}
.doc-name{font-size:17.5px;color:#6e6e6e}
.doc-lock{margin-left:13px}
.doc-saved{margin-left:12px;font-size:14.5px;color:#8e8e8e}
.doc-cloud{margin-left:7px}
.doc-actions{margin-left:auto;display:flex;align-items:center;gap:26px;padding-right:27px}
.share{font-size:17.5px;color:#333;margin:0 10px 0 20px;width:40px;text-align:center}

.toolbar{height:56px;flex:none;display:flex;align-items:center;padding-left:13px}
.fmt-add{width:22px;height:22px;border-radius:50%;background:#0cab6e;flex:none}
.grp{display:flex;align-items:center}
.tb{width:42.5px;height:24px;display:flex;align-items:center;justify-content:center;flex:none}
.tb svg{width:20px;height:20px}
.tb.n{width:34px}
.txt{font-size:20px;color:#111;font-family:"Noto Sans","Noto Sans CJK SC",sans-serif}
.it{font-family:"Liberation Serif",serif;font-style:italic}
.st{text-decoration:line-through;text-decoration-thickness:1.500px}
.un{text-decoration:underline;text-underline-offset:3px}
.fc{text-decoration:underline;text-decoration-color:#a33;text-decoration-thickness:2px;text-underline-offset:2px}
.crt{flex:none;display:block}
.g-hist{margin-left:22px}
.sel{display:flex;align-items:center;font-size:17.5px;color:#111}
.s-style{margin-left:32px;gap:20px}
.s-size{margin-left:29px;gap:15.500px}
.g-text{margin-left:16px}
.c1{margin-left:1px}
.g-color{margin-left:23px}
.hl{margin-left:11px}
.g-para{margin-left:25px}
.m14{margin-left:14px}
.m9{margin-left:9px}
.c5{margin-left:5px}
.g-ins{margin-left:24px}
.g-ext{margin-left:12px}

.doc-row{flex:1;min-height:0;display:flex}
.editor{width:1126px;flex:none;padding:17px 0 0 91px;overflow:hidden;position:relative;font-size:18.75px}
.ed-red-head{margin:0 0 11px;font-size:18.75px;line-height:32px;font-weight:700;color:#e13f3f}
.callout{margin-left:3px;width:934px;height:611px;background:#fdfee8;border:1px solid #e6efc4;border-radius:3px;padding:10px 12px 0;color:#2e2e2e}
.callout p{margin:0 0 8.500px;line-height:33.600px;white-space:nowrap}
.callout .tall{line-height:35.600px}
.callout .after-sub{margin-bottom:11px}
.d{letter-spacing:1px}
.d2{letter-spacing:2px}
.d3{letter-spacing:.3px}
.d5{letter-spacing:.55px}
.sym{font-family:"Noto Sans",sans-serif}
.red{color:#e13f3f;font-weight:700}
mark{background:#ffd94e;color:inherit;letter-spacing:.5px}
sub,sup{font-size:14px;line-height:0}
sub{vertical-align:-6px}
sup{vertical-align:8px}
.ed-h3{margin:34px 0 15px 2px;font-size:18.75px;line-height:34px;font-weight:700;color:#222}
.figure{margin-left:4px;width:933px;height:140px;background:#e7fdfe;padding:15px 13px}
.eq{width:819px;height:79px;background:#fff;display:flex;align-items:flex-start;padding-left:18px;font-family:"Liberation Serif",serif;font-size:38px;line-height:62px;color:#111;white-space:nowrap}
.eq-i{font-style:italic}
.eq-lim{display:flex;flex-direction:column;align-items:center;width:176px;margin:0 4px;padding-top:7px}
.eq-min{font-size:36px;line-height:46px}
.eq-under{font-size:26px;line-height:26px;margin-top:-7px}
.eq-brace{font-size:60px;font-weight:200}
.open{margin-left:-3px}
.close{margin-right:-5px}
.eq-op{margin:0 5px}
.eq-star{margin:0 7px 0 3px}
.eq-gap{margin-left:2px}
.eq-tail{letter-spacing:3px}
.eq2{margin-top:17px;width:489px;height:30px;background:#fff;display:flex;padding:4px 0 0 187px;gap:268px}
.tick{width:13px;height:3px;background:#333}
.wordcount{position:absolute;left:4px;bottom:4px;font-size:14px;color:#aaa}

.outline{flex:1;min-width:0;position:relative;display:flex;flex-direction:column;padding-top:50px}
.outline-title{padding-left:36px;font-size:16px;line-height:32px;font-weight:700;color:#222;height:45px}
.outline-list{flex:1;min-height:0;overflow:hidden;border-left:5px solid #eeeeee;position:relative}
.ol1,.ol2{height:35px;font-size:17.5px;color:#666;white-space:nowrap;display:flex;align-items:center}
.outline-list>:first-child{margin-top:-7px}
.ol1{padding-left:50px;position:relative}
.ol2{padding-left:74px}
.olt{position:absolute;left:32px;top:13px}
.active{font-weight:700;color:#555}
.active::before{content:"";position:absolute;left:-5px;top:3px;width:3px;height:27px;background:#0aa679}
.outline-scroll{position:absolute;left:372px;top:420px;width:10px;height:442px;background:#ececec;border-radius:5px}
.outline-scroll2{position:absolute;right:0;top:786px;width:10px;height:34px;background:#e4e4e4;border-radius:5px 0 0 5px}
.kbd-fab{position:absolute;left:315px;top:765px;width:48px;height:48px;border-radius:50%;background:#fff;box-shadow:0 4px 10px rgba(0,0,0,.06);display:flex;align-items:center;justify-content:center}

/* taskbar */
.taskbar{height:60px;flex:none;display:flex;align-items:center;background:#ededed;border-top:1px solid #bfbfbf;position:relative}
.weather{width:612px;flex:none;display:flex;align-items:center;padding-left:30px;position:relative;height:100%}
.wx-badge{position:absolute;left:39px;top:7px;width:20px;height:20px;border-radius:50%;background:#d63a18;color:#fff;font-size:13px;font-family:"Liberation Sans",sans-serif;display:flex;align-items:center;justify-content:center}
.wx-text{display:flex;flex-direction:column;margin:0 0 5px 4px;font-size:15px;line-height:20px}
.wx-a{color:#111}
.wx-b{color:#555}
.winlogo{flex:none}
.searchbox{margin-left:18px;width:273px;height:38px;flex:none;background:#fff;border-radius:19px;border:1px solid #e0e0e0;display:flex;align-items:center;padding-left:13px;position:relative}
.search-ph{margin-left:11px;font-size:17.5px;color:#666}
.dolphin{margin-left:auto;margin-right:4px;width:54px;height:34px}
.taskview{margin-left:17px;flex:none}
.apps{margin-left:19px;display:flex;align-items:center}
.app-slot{width:55px;height:50px;flex:none;display:flex;align-items:center;justify-content:center;position:relative}
.run::after{content:"";position:absolute;left:50%;margin-left:-3.500px;bottom:-2px;width:7px;height:4px;border-radius:2px;background:#8b8b8b}
.wechat{width:49px;margin-left:4px;background:#fcc1b8;border-radius:5px}
.wechat::after{content:"";position:absolute;left:50%;margin-left:-3.500px;bottom:0;width:7px;height:4px;border-radius:2px;background:#c62828}
.tray{margin-left:auto;display:flex;align-items:center;padding-right:25px}
.ti{display:flex;align-items:center;justify-content:center;height:30px;flex:none}
.w40{width:40px}.w39{width:39px}.w60{width:60.500px}.w30{width:30px}
.ime{font-size:17.5px;color:#222}
.clock{width:60px;margin-left:37px;display:flex;flex-direction:column;align-items:center;font-size:15px;line-height:22px;color:#222;white-space:nowrap}
.bell{margin-left:-.5px}
.stamp{position:absolute;right:0;bottom:0;width:136px;height:25px;background:#3d3d3d;color:#fff;font-size:14px;line-height:25px;text-align:center;white-space:nowrap;font-family:"Liberation Sans",sans-serif}

/* overlays */
.pen-bar{position:absolute;left:5px;top:5px;width:67px;height:483px;border:5px solid #a9a9a9;border-radius:12px;background:#6b6b6b}
.pen-inner{margin-left:-1px}
.pen-art{display:block}
.logo-arc{position:absolute;left:1px;top:2px;z-index:-1}
.side-tab{position:absolute;right:0;top:45px;width:31px;height:50px;background:#bdbdbd;border-radius:6px 0 0 6px;padding:1px 0 0 8px}
.ink{position:absolute;left:0;top:0;pointer-events:none}
```
